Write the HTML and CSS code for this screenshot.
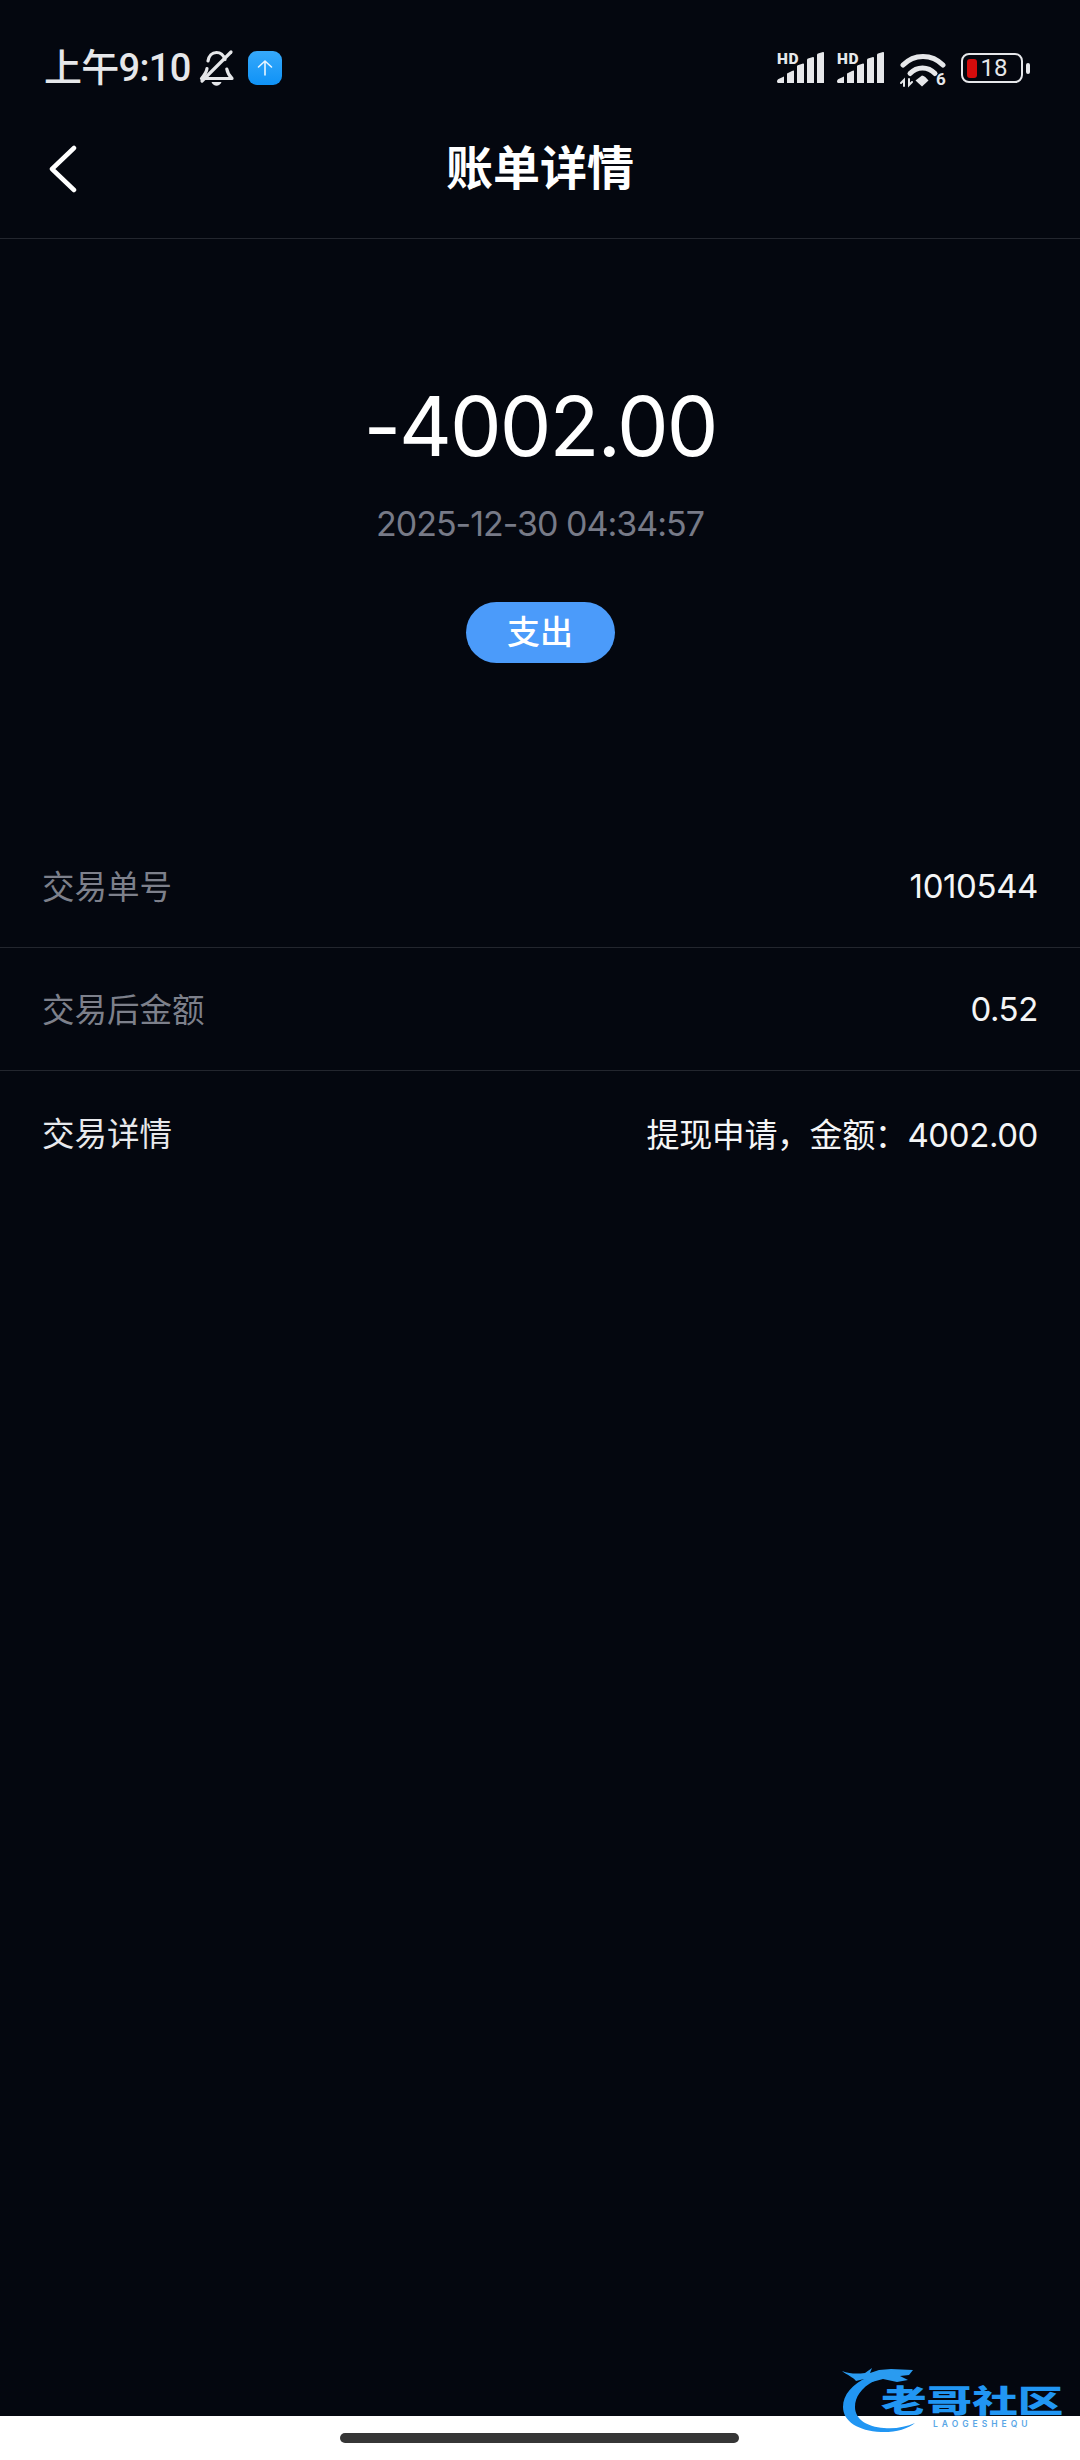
FILE: index.html
```html
<!DOCTYPE html>
<html lang="zh-CN">
<head>
  <meta charset="UTF-8" />
  <title>账单详情</title>
  <link rel="stylesheet" href="styles.css">
</head>
<body>
  <div class="screen">
    <div class="statusBar">
      <div class="statusLeft">
        <span class="clock">上午9:10</span>
        <svg class="bellIcon" width="36" height="38" viewBox="0 0 36 38" fill="none" stroke="#e6e7ea" stroke-width="3.200" stroke-linecap="round" stroke-linejoin="round">
          <path d="M8 19.500C7.500 23.500 5.500 26 2.500 29.500H33C30.500 27 28.500 24 27.800 20M26 10.500C24.500 6 21.500 3.500 17.500 3.500 13 3.500 9.800 7 9 12"/>
          <path d="M3 32 32 3"/>
          <path d="M12.500 33h10c-1 2.500-3 3.800-5 3.800s-4-1.300-5-3.800z" fill="#e6e7ea" stroke="none"/>
        </svg>
        <div class="uploadBadge">
          <svg width="20" height="20" viewBox="0 0 20 20" fill="none" stroke="#e8f5ff" stroke-width="1.600" stroke-linecap="round" stroke-linejoin="round">
            <path d="M10 17V3M3.500 9 10 3l6.500 6"/>
          </svg>
        </div>
      </div>
      <div class="statusRight">
        <div class="signal">
          <span class="hd">HD</span>
          <svg width="50" height="32" viewBox="0 0 50 32" fill="#e6e7ea">
            <path d="M0 29.500c0-1 .5-1.800 1.500-2.500L7 24.500V31H1.500C.6 31 0 30.400 0 29.500zM10 21.500l5-2.500 1.500-.5c.3 0 .5.200.5.500V31h-7zM20 14.500c0-.5.300-1 .8-1.300L26 11.500c.5 0 1 .3 1 1V31h-7zM30 8c0-.7.400-1.200 1-1.500l5-1.500c.5 0 1 .4 1 1v25h-7zM40 3c0-.7.400-1.200 1-1.400L46 0c.6 0 1 .4 1 1v30h-7z"/>
          </svg>
        </div>
        <div class="signal">
          <span class="hd">HD</span>
          <svg width="50" height="32" viewBox="0 0 50 32" fill="#e6e7ea">
            <path d="M0 29.500c0-1 .5-1.800 1.500-2.500L7 24.500V31H1.500C.6 31 0 30.400 0 29.500zM10 21.500l5-2.500 1.500-.5c.3 0 .5.200.5.500V31h-7zM20 14.500c0-.5.300-1 .8-1.300L26 11.500c.5 0 1 .3 1 1V31h-7zM30 8c0-.7.400-1.200 1-1.500l5-1.500c.5 0 1 .4 1 1v25h-7zM40 3c0-.7.400-1.200 1-1.400L46 0c.6 0 1 .4 1 1v30h-7z"/>
          </svg>
        </div>
        <svg class="wifiIcon" width="46" height="36" viewBox="0 0 46 36" fill="none" stroke="#e6e7ea" stroke-width="5" stroke-linecap="round">
          <path d="M3 13C14 1.500 32 1.500 43 13"/>
          <path d="M10 21.500C17 14 28 14 35 21.500"/>
          <path d="M22 23.500l-6.500 5L22 34.500l6.500-6c-2-2.500-4.500-5-6.500-5z" fill="#e6e7ea" stroke="none"/>
          <path d="M4 34v-6l-3 3M9 27v6l3-3" stroke-width="2"/>
          <text class="wifiSix" x="36" y="33">6</text>
        </svg>
        <div class="battery">
          <div class="batteryBody">
            <span class="batteryFill"></span>
            <span class="batteryText">18</span>
          </div>
          <span class="batteryCap"></span>
        </div>
      </div>
    </div>

    <header class="navBar">
      <svg class="backIcon" width="30" height="48" viewBox="0 0 30 48" fill="none" stroke="#fff" stroke-width="4.500" stroke-linecap="round" stroke-linejoin="round">
        <path d="M25 3 3 24l22 21"/>
      </svg>
      <h1 class="navTitle">账单详情</h1>
    </header>

    <section class="summary">
      <div class="amount">-4002.00</div>
      <div class="time">2025-12-30 04:34:57</div>
      <div class="tag">支出</div>
    </section>

    <section class="details">
      <div class="row">
        <span class="label">交易单号</span>
        <span class="value">1010544</span>
      </div>
      <div class="row">
        <span class="label">交易后金额</span>
        <span class="value">0.52</span>
      </div>
      <div class="row rowLast">
        <span class="label labelLight">交易详情</span>
        <span class="value">提现申请，金额：4002.00</span>
      </div>
    </section>

    <div class="spacer"></div>

    <div class="gestureArea">
      <div class="gestureBar"></div>
    </div>

    <div class="watermark">
      <svg class="dragon" width="96" height="72" viewBox="0 0 96 72" fill="none">
        <path d="M30 13C14 20 5 31 5 43c0 14 15 24 38 25 14 .5 27-3 34-9-9 4-20 6-31 5-17-1-29-9-29-21 0-10 6-19 19-26z" fill="#2196f3"/>
        <path d="M4 7c8 3 15 3 23 2l7-5-2 5 9-3 12-1 22 1-4 5-9 1 8 4-11 2-14-3-11 3-8-3-8 2c-3-4-9-6-14-10z" fill="#2a9bf0"/>
      </svg>
      <div class="wmText">老哥社区</div>
      <div class="wmSub">LAOGESHEQU</div>
    </div>
  </div>
</body>
</html>
```

FILE: styles.css
```css
* { box-sizing: border-box; }
html, body { margin: 0; padding: 0; }
body {
  width: 1080px;
  height: 2460px;
  background: #fff;
  font-family: Inter, "Noto Sans CJK SC", sans-serif;
  color: #fff;
  overflow: hidden;
}
.screen {
  position: relative;
  display: flex;
  flex-direction: column;
  height: 2460px;
}

/* status bar */
.statusBar {
  height: 92px;
  padding: 46px 50px 0 44px;
  display: flex;
  justify-content: space-between;
  align-items: flex-start;
  background: #04070f;
}
.statusLeft { display: flex; align-items: center; height: 44px; }
.clock {
  font-family: Roboto, "Noto Sans CJK SC", sans-serif;
  font-size: 38px;
  line-height: 44px;
  color: #e6e7ea;
  font-weight: 500;
  letter-spacing: -0.7px;
}
.bellIcon { margin-left: 8px; }
.uploadBadge {
  width: 34px;
  height: 34px;
  margin-left: 13px;
  border-radius: 9px;
  background: linear-gradient(#36a9fb, #0f92f6);
  display: flex;
  align-items: center;
  justify-content: center;
}
.statusRight { display: flex; align-items: flex-start; height: 44px; }
.signal { position: relative; width: 50px; height: 44px; margin-right: 10px; }
.signal svg { position: absolute; left: 0; top: 6px; }
.hd {
  position: absolute;
  left: 0;
  top: 6px;
  font-family: Roboto, sans-serif;
  font-size: 15.500px;
  line-height: 14px;
  font-weight: 900;
  letter-spacing: 0.5px;
  color: #e6e7ea;
}
.wifiIcon { margin-left: 3px; margin-top: 6px; }
.wifiSix { font: 700 17px Roboto, sans-serif; fill: #e6e7ea; stroke: none; }
.battery { display: flex; align-items: center; margin-left: 15px; margin-top: 7px; }
.batteryBody {
  width: 62px;
  height: 30px;
  border: 2.500px solid #e6e7ea;
  border-radius: 8px;
  display: flex;
  align-items: center;
  padding-left: 3.500px;
}
.batteryFill { width: 10px; height: 19px; background: #d40c0c; border-radius: 3px; }
.batteryText {
  margin-left: 4px;
  font-family: Roboto, sans-serif;
  font-size: 24px;
  line-height: 25px;
  color: #e6e7ea;
}
.batteryCap { width: 4px; height: 11px; margin-left: 3px; background: #e6e7ea; border-radius: 2px; }

/* nav */
.navBar {
  height: 147px;
  padding: 0 0 0 49px;
  position: relative;
  display: flex;
  align-items: center;
  background: #04070f;
  border-bottom: 1px solid #23262e;
}
.navBar .backIcon { flex: none; margin-top: 7px; }
.navTitle {
  position: absolute;
  left: 0;
  right: 0;
  margin: 6px 0 0;
  text-align: center;
  font-size: 47px;
  font-weight: 700;
  line-height: 60px;
}

/* amount block */
.summary {
  height: 586px;
  background: #04070f;
  display: flex;
  flex-direction: column;
  align-items: center;
  padding-top: 138px;
}
.amount { font-size: 82px; line-height: 100px; letter-spacing: -2px; }
.time { margin-top: 25px; font-size: 34px; line-height: 44px; letter-spacing: -1px; color: #777a87; }
.tag {
  margin-top: 56px;
  width: 149px;
  height: 61px;
  border-radius: 31px;
  background: #4b9bfa;
  font-size: 33px;
  font-weight: 500;
  line-height: 61px;
  text-align: center;
}

/* rows */
.details { background: #04070f; }
.row {
  height: 123px;
  padding: 0 42px;
  display: flex;
  align-items: center;
  justify-content: space-between;
  border-bottom: 1px solid #23262e;
}
.rowLast { border-bottom: none; }
.label { margin-top: -3px; font-size: 32.500px; color: #7d808b; }
.labelLight { color: #e8e9ec; }
.value { font-size: 33px; letter-spacing: -0.4px; color: #f4f5f6; }

.spacer { flex: 1; background: #04070f; }

.gestureArea {
  height: 44px;
  background: #fff;
  padding: 17px 0 0 340px;
}
.gestureBar { width: 399px; height: 10px; border-radius: 5px; background: #363636; }

/* watermark over the bottom right corner */
.watermark { position: absolute; left: 838px; top: 2364px; width: 240px; height: 72px; }
.dragon { position: absolute; left: 0; top: 0; }
.wmText {
  position: absolute;
  left: 43px;
  top: 21px;
  font-size: 31px;
  line-height: 32px;
  font-weight: 900;
  color: #2196f3;
  white-space: nowrap;
  transform: scaleX(1.47);
  transform-origin: left center;
}
.wmSub {
  position: absolute;
  left: 95px;
  top: 55px;
  font-size: 8.500px;
  line-height: 10px;
  letter-spacing: 4px;
  font-weight: 600;
  color: #5aa7e6;
}
```
